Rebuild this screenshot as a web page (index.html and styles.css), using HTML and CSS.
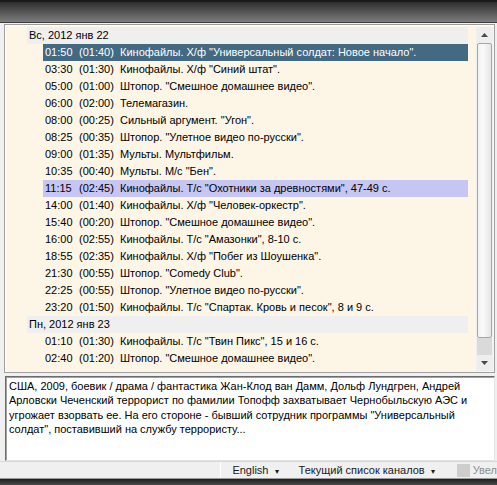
FILE: index.html
```html
<!doctype html>
<html lang="ru">
    <head>
        <meta charset="UTF-8" />
        <title>Программа передач</title>
        <link rel="stylesheet" href="styles.css">
    </head>
    <body>
        <div class="window">
            <div class="titlebar"></div>

            <div class="content">
                <div class="list-panel">
                    <div class="list">
                        <div class="day">Вс, 2012 янв 22</div>
                        <div class="row selected"><span class="time">01:50</span><span class="dur">(01:40)</span><span class="title">Кинофайлы. Х/ф "Универсальный солдат: Новое начало".</span></div>
                        <div class="row"><span class="time">03:30</span><span class="dur">(01:30)</span><span class="title">Кинофайлы. Х/ф "Синий штат".</span></div>
                        <div class="row"><span class="time">05:00</span><span class="dur">(01:00)</span><span class="title">Штопор. "Смешное домашнее видео".</span></div>
                        <div class="row"><span class="time">06:00</span><span class="dur">(02:00)</span><span class="title">Телемагазин.</span></div>
                        <div class="row"><span class="time">08:00</span><span class="dur">(00:25)</span><span class="title">Сильный аргумент. "Угон".</span></div>
                        <div class="row"><span class="time">08:25</span><span class="dur">(00:35)</span><span class="title">Штопор. "Улетное видео по-русски".</span></div>
                        <div class="row"><span class="time">09:00</span><span class="dur">(01:35)</span><span class="title">Мульты. Мультфильм.</span></div>
                        <div class="row"><span class="time">10:35</span><span class="dur">(00:40)</span><span class="title">Мульты. М/с "Бен".</span></div>
                        <div class="row current"><span class="time">11:15</span><span class="dur">(02:45)</span><span class="title">Кинофайлы. Т/с "Охотники за древностями", 47-49 с.</span></div>
                        <div class="row"><span class="time">14:00</span><span class="dur">(01:40)</span><span class="title">Кинофайлы. Х/ф "Человек-оркестр".</span></div>
                        <div class="row"><span class="time">15:40</span><span class="dur">(00:20)</span><span class="title">Штопор. "Смешное домашнее видео".</span></div>
                        <div class="row"><span class="time">16:00</span><span class="dur">(02:55)</span><span class="title">Кинофайлы. Т/с "Амазонки", 8-10 с.</span></div>
                        <div class="row"><span class="time">18:55</span><span class="dur">(02:35)</span><span class="title">Кинофайлы. Х/ф "Побег из Шоушенка".</span></div>
                        <div class="row"><span class="time">21:30</span><span class="dur">(00:55)</span><span class="title">Штопор. "Comedy Club".</span></div>
                        <div class="row"><span class="time">22:25</span><span class="dur">(00:55)</span><span class="title">Штопор. "Улетное видео по-русски".</span></div>
                        <div class="row"><span class="time">23:20</span><span class="dur">(01:50)</span><span class="title">Кинофайлы. Т/с "Спартак. Кровь и песок", 8 и 9 с.</span></div>
                        <div class="day">Пн, 2012 янв 23</div>
                        <div class="row"><span class="time">01:10</span><span class="dur">(01:30)</span><span class="title">Кинофайлы. Т/с "Твин Пикс", 15 и 16 с.</span></div>
                        <div class="row"><span class="time">02:40</span><span class="dur">(01:20)</span><span class="title">Штопор. "Смешное домашнее видео".</span></div>
                    </div>
                    <div class="scrollbar">
                        <div class="scroll-btn up">
                            <svg width="7" height="4" viewBox="0 0 7 4"><path d="M0 4 L3.5 0 L7 4 Z" fill="#4a4a4a"/></svg>
                        </div>
                        <div class="thumb"></div>
                        <div class="track"></div>
                        <div class="scroll-btn down">
                            <svg width="7" height="4" viewBox="0 0 7 4"><path d="M0 0 L7 0 L3.5 4 Z" fill="#4a4a4a"/></svg>
                        </div>
                    </div>
                </div>

                <div class="description">США, 2009, боевик / драма / фантастика Жан-Клод ван Дамм, Дольф Лундгрен, Андрей Арловски Чеченский террорист по фамилии Топофф захватывает Чернобыльскую АЭС и угрожает взорвать ее. На его стороне - бывший сотрудник программы "Универсальный солдат", поставивший на службу террористу...</div>
            </div>

            <div class="statusbar">
                <span class="status-sep"></span>
                <span class="status-item">English <span class="caret">▾</span></span>
                <span class="status-item">Текущий список каналов <span class="caret">▾</span></span>
                <span class="status-check"></span>
                <span class="status-disabled">Увел</span>
            </div>
            <div class="bottombar"></div>
        </div>
    </body>
</html>
```

FILE: styles.css
```css
* {
    box-sizing: border-box;
}

html,
body {
    margin: 0;
    padding: 0;
}

body {
    font-family: "Liberation Sans", Arial, sans-serif;
    font-size: 11px;
    color: #000;
    background: #f0f0f0;
    overflow: hidden;
}

.window {
    width: 497px;
    height: 485px;
    display: flex;
    flex-direction: column;
    overflow: hidden;
}

.titlebar {
    height: 23px;
    flex: none;
    border-top: 2px solid #1a1a1a;
    border-bottom: 1px solid #3c3c3c;
    background: linear-gradient(#2e2e2e, #7c7c7c);
}

.content {
    flex: 1;
    display: flex;
    flex-direction: column;
    padding: 1px 2px 0 4px;
    background: #f0f0f0;
}

/* Programme list */

.list-panel {
    height: 349px;
    flex: none;
    display: flex;
    border: 1px solid #a0a0a0;
    border-top-color: #9a9a9a;
    background: #fdf5e6;
    padding: 2px 1px 1px 2px;
    box-shadow: inset 1px 1px 0 #fff;
}

.list {
    flex: 1;
    padding: 0 8px 0 20px;
    overflow: hidden;
}

.day {
    height: 17px;
    line-height: 17px;
    padding-left: 2px;
    background: #efefef;
    white-space: nowrap;
}

.row {
    height: 17px;
    line-height: 17px;
    margin-left: 16px;
    padding-left: 2px;
    display: flex;
    white-space: nowrap;
}

.row.selected {
    background: #436983;
    color: #fff;
}

.row.current {
    background: #c6c6f4;
}

.time {
    width: 34px;
    flex: none;
}

.dur {
    width: 41px;
    flex: none;
}

.title {
    overflow: hidden;
}

/* Scrollbar */

.scrollbar {
    width: 17px;
    flex: none;
    display: flex;
    flex-direction: column;
    background: #f0f0f0;
    padding: 0 1px;
}

.scroll-btn {
    height: 16px;
    flex: none;
    display: flex;
    align-items: center;
    justify-content: center;
    background: #eeeeee;
}

.thumb {
    height: 295px;
    flex: none;
    border: 1px solid #a6a6a6;
    border-radius: 2px;
    background: linear-gradient(90deg, #f2f2f2, #fafafa 40%, #e4e4e4);
}

.track {
    flex: 1;
    background: #dadada;
}

/* Description */

.description {
    height: 85px;
    margin-top: 3px;
    margin-left: 1px;
    padding: 2px 3px;
    background: #fff;
    border: 1px solid #6c6c6c;
    border-right-color: #e3e3e3;
    border-bottom-color: #e3e3e3;
    box-shadow: inset 1px 1px 0 #a0a0a0;
    line-height: 14.4px;
}

/* Status bar */

.statusbar {
    height: 17px;
    flex: none;
    display: flex;
    align-items: center;
    padding-left: 220px;
    background: #f0f0f0;
    border-top: 1px solid #d8d8d8;
    white-space: nowrap;
    overflow: hidden;
}

.status-sep {
    width: 1px;
    height: 16px;
    background: #fff;
    margin-right: 12px;
}

.status-item {
    margin-right: 20px;
    color: #1a1a1a;
}

.caret {
    font-size: 8px;
    margin-left: 3px;
}

.status-check {
    width: 13px;
    height: 13px;
    background: #cdcdcd;
    margin-left: 2px;
    margin-right: 3px;
    flex: none;
}

.status-disabled {
    color: #8d8d8d;
}

.bottombar {
    height: 7px;
    flex: none;
    border-top: 1px solid #9a9a9a;
    background: linear-gradient(#1e1e1e, #4a4a4a);
}
```
